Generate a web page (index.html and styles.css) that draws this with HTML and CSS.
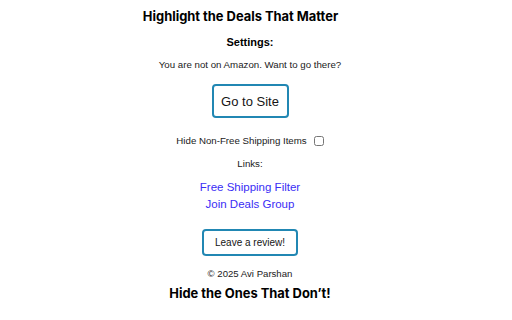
FILE: index.html
```html
<!DOCTYPE html>
<html lang="en">
<head>
<meta charset="utf-8">
<title>Deals Highlighter</title>
<link rel="stylesheet" href="styles.css">
</head>
<body>
<main class="popup">
  <h1 class="tagline tagline-top">Highlight the Deals That Matter</h1>
  <h2 class="settings-title">Settings:</h2>
  <p class="note">You are not on Amazon. Want to go there?</p>
  <button class="btn btn-site" type="button">Go to Site</button>
  <label class="option"><span class="option-text">Hide Non-Free Shipping Items</span><input type="checkbox" class="check"></label>
  <p class="note links-title">Links:</p>
  <nav class="links">
    <a href="#" class="link">Free Shipping Filter</a>
    <a href="#" class="link">Join Deals Group</a>
  </nav>
  <button class="btn btn-review" type="button">Leave a review!</button>
  <p class="copyright">© 2025 Avi Parshan</p>
  <p class="tagline tagline-bottom">Hide the Ones That Don’t!</p>
</main>
</body>
</html>
```

FILE: styles.css
```css
html, body {
  margin: 0;
  padding: 0;
  background: #ffffff;
}

.popup {
  width: 500px;
  display: flex;
  flex-direction: column;
  align-items: center;
  font-family: "Liberation Sans", Arial, sans-serif;
  color: #1a1a1a;
}

.tagline {
  margin: 0;
  font-family: Inter, "Liberation Sans", sans-serif;
  font-weight: 700;
  font-size: 12.9px;
  line-height: 16px;
  color: #000000;
}

.tagline-top {
  margin-top: 9px;
  padding-right: 19px;
}

.tagline-bottom {
  margin-top: 6px;
}

.settings-title {
  margin: 11px 0 0;
  font-size: 11px;
  line-height: 13px;
  font-weight: 700;
  color: #000000;
}

.note {
  margin: 10px 0 0;
  font-size: 9.7px;
  line-height: 12px;
}

.btn {
  font-family: "Liberation Sans", Arial, sans-serif;
  background: #ffffff;
  border: 2px solid #2187b3;
  border-radius: 4px;
  color: #151515;
  padding: 0;
  box-sizing: border-box;
  display: flex;
  align-items: center;
  justify-content: center;
  cursor: pointer;
}

.btn-site {
  margin-top: 13px;
  width: 77px;
  height: 34px;
  font-size: 13px;
}

.option {
  margin-top: 17px;
  display: flex;
  align-items: center;
  gap: 7px;
  font-size: 9.7px;
  line-height: 12px;
}

.check {
  margin: 0;
  width: 10px;
  height: 10px;
}

.links-title {
  margin-top: 11px;
}

.links {
  margin-top: 8.5px;
  display: flex;
  flex-direction: column;
  align-items: center;
}

.link {
  font-size: 11.5px;
  line-height: 17px;
  color: #3a2df5;
  text-decoration: none;
}

.btn-review {
  margin-top: 16.5px;
  width: 96px;
  height: 27px;
  font-size: 10px;
}

.copyright {
  margin: 12px 0 0;
  font-size: 9.6px;
  line-height: 12px;
}
```
